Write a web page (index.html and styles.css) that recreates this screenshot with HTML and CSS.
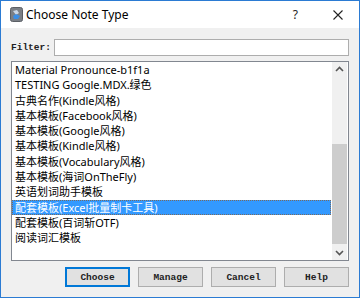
FILE: index.html
```html
<!DOCTYPE html>
<html>
<head>
<meta charset="utf-8">
<link rel="stylesheet" href="styles.css">
</head>
<body>
<div class="window">
  <div class="titlebar">
    <svg class="app-icon" width="13" height="15" viewBox="0 0 13 15">
      <rect x="0.5" y="0.5" width="12" height="14" rx="2" fill="#7a7f86" stroke="#5c6066"/>
      <path d="M3 4 L7 3 L9 6 L6 8 Z" fill="#c9d6e6"/>
      <path d="M3 9 L6 7 L10 9 L8 12 L4 12 Z" fill="#3a8ee6"/>
    </svg>
    <span class="title">Choose Note Type</span>
    <span class="help-btn">?</span>
    <svg class="close-btn" width="10" height="10" viewBox="0 0 10 10">
      <path d="M0.5 0.5 L9.5 9.5 M9.5 0.5 L0.5 9.5" stroke="#222" stroke-width="1.1"/>
    </svg>
  </div>
  <div class="body">
    <div class="filter-row">
      <span class="mono label">Filter:</span>
      <div class="input"></div>
    </div>
    <div class="listbox">
      <ul class="items">
        <li>Material Pronounce-b1f1a</li>
        <li>TESTING Google.MDX.绿色</li>
        <li>古典名作(Kindle风格)</li>
        <li>基本模板(Facebook风格)</li>
        <li>基本模板(Google风格)</li>
        <li>基本模板(Kindle风格)</li>
        <li>基本模板(Vocabulary风格)</li>
        <li>基本模板(海词OnTheFly)</li>
        <li>英语划词助手模板</li>
        <li class="selected">配套模板(Excel批量制卡工具)</li>
        <li>配套模板(百词斩OTF)</li>
        <li>阅读词汇模板</li>
      </ul>
      <div class="scrollbar">
        <svg class="arrow" width="15" height="15" viewBox="0 0 15 15"><path d="M4 9 L7.5 5.5 L11 9" fill="none" stroke="#555" stroke-width="1.6"/></svg>
        <div class="track"><div class="thumb"></div></div>
        <svg class="arrow" width="15" height="15" viewBox="0 0 15 15"><path d="M4 6 L7.5 9.5 L11 6" fill="none" stroke="#555" stroke-width="1.6"/></svg>
      </div>
    </div>
    <div class="buttons">
      <div class="btn mono default">Choose</div>
      <div class="btn mono">Manage</div>
      <div class="btn mono">Cancel</div>
      <div class="btn mono">Help</div>
    </div>
  </div>
</div>
</body>
</html>
```

FILE: styles.css
```css
* { box-sizing: border-box; }
html, body { margin: 0; padding: 0; background: #fff; }
.window {
  width: 360px;
  height: 298px;
  border: 1px solid #2b7bd3;
  background: #f0f0f0;
  display: flex;
  flex-direction: column;
  font-family: "Noto Sans", "Noto Sans CJK SC", sans-serif;
}
.titlebar {
  height: 27px;
  flex: none;
  background: #fff;
  display: flex;
  align-items: center;
  padding-left: 9px;
  position: relative;
}
.app-icon { flex: none; }
.title {
  margin-left: 3px;
  font-size: 12px;
  color: #000;
}
.help-btn {
  margin-left: auto;
  font-size: 12px;
  color: #222;
  margin-right: 35px;
}
.close-btn { margin-right: 16px; flex: none; }
.body {
  flex: 1;
  display: flex;
  flex-direction: column;
  padding: 11px 10px 0 10px;
}
.mono {
  font-family: "Liberation Mono", "DejaVu Sans Mono", monospace;
  font-size: 9.5px;
  font-weight: bold;
  color: #222;
}
.filter-row {
  display: flex;
  align-items: center;
  height: 17px;
}
.label { width: 43px; }
.input {
  flex: 1;
  height: 17px;
  background: #fff;
  border: 1px solid #adadad;
}
.listbox {
  margin-top: 5px;
  height: 200px;
  border: 1px solid #828790;
  background: #fff;
  display: flex;
}
.items {
  list-style: none;
  margin: 0;
  padding: 0 1px 0 0;
  flex: 1;
  overflow: hidden;
}
.items li {
  height: 15.3px;
  line-height: 15px;
  font-size: 11px;
  padding-left: 3px;
  color: #000;
  white-space: nowrap;
}
.items li.selected {
  background: #3399ff;
  color: #fff;
  outline: 1px dotted #7a6a5e;
  outline-offset: -1px;
}
.scrollbar {
  width: 15px;
  flex: none;
  background: #f0f0f0;
  display: flex;
  flex-direction: column;
  margin-right: 1px;
}
.arrow { flex: none; display: block; }
.track {
  flex: 1;
  display: flex;
  flex-direction: column;
  justify-content: flex-end;
}
.thumb {
  height: 100px;
  background: #cdcdcd;
  margin-bottom: 1px;
}
.buttons {
  display: flex;
  gap: 8px;
  margin-top: 6px;
  padding-left: 54px;
}
.btn {
  width: 65px;
  height: 20px;
  background: #e1e1e1;
  border: 1px solid #adadad;
  display: flex;
  align-items: center;
  justify-content: center;
}
.btn.default { border: 2px solid #0078d7; }
```
